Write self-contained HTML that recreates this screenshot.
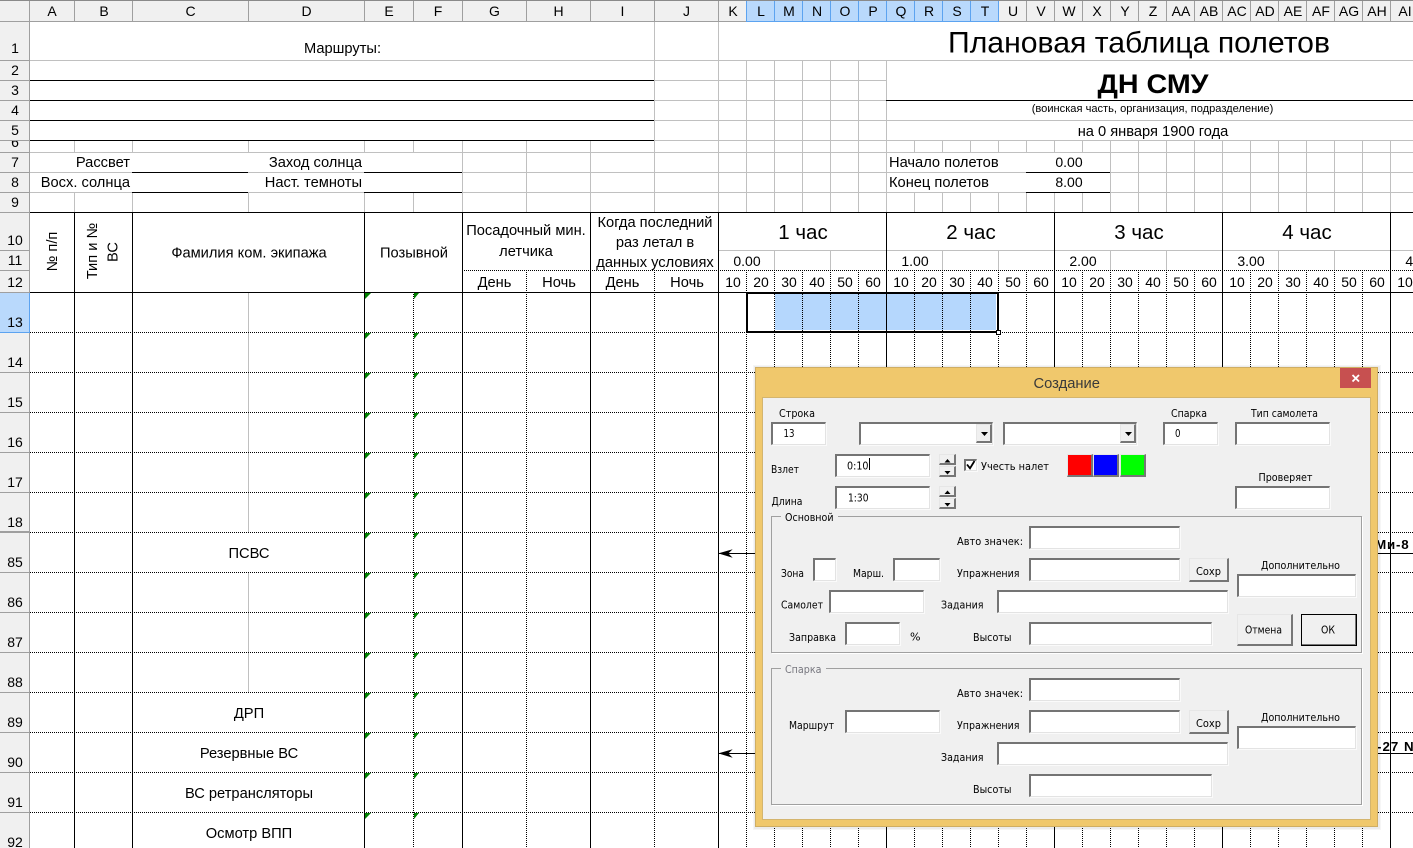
<!DOCTYPE html>
<html><head><meta charset="utf-8"><title>Плановая таблица полетов</title>
<style>
html,body{margin:0;padding:0;background:#fff;width:1413px;height:848px;overflow:hidden}
#w{position:relative;width:1413px;height:848px;overflow:hidden}
svg{position:absolute;left:0;top:0}
.s text{font-family:"Liberation Sans",sans-serif;font-size:14.67px;fill:#000}
.s .n text{font-size:14px}
.d text{font-family:"DejaVu Sans","Liberation Sans",sans-serif;font-size:11px;fill:#000}
.in,.bt,.gr,.lg{position:absolute;box-sizing:border-box;display:block}
.in{background:#fff;border-style:solid;border-width:2px 1px 1px 2px;border-color:#747474 #e3e3e3 #e3e3e3 #747474;box-shadow:1px 1px 0 #fafafa}
.bt{background:#f0f0f0;border-style:solid;border-width:1px 2px 2px 1px;border-color:#e6e6e6 #767676 #767676 #e6e6e6}
.gr{border:1px solid #a0a0a0;box-shadow:1px 1px 0 #fff}
.lg{background:#f0f0f0;height:6px}
</style></head><body><div id="w">
<svg class="s" width="1413" height="848" viewBox="0 0 1413 848" shape-rendering="crispEdges">
<defs><clipPath id="r6"><rect x="0" y="141" width="29" height="11"/></clipPath></defs>
<!-- header backgrounds -->
<rect x="0" y="0" width="1413" height="21" fill="#f0f0f0"/>
<rect x="0" y="0" width="29" height="848" fill="#f0f0f0"/>
<rect x="746" y="1" width="252" height="20" fill="#b9d9fc"/>
<rect x="0" y="293" width="29" height="39" fill="#b9d9fc"/>
<rect x="775" y="294" width="221" height="36" fill="#b5d7fd"/>
<!-- header lines -->
<path fill="none" stroke="#9f9f9f" d="M0 21.5H1413M29.5 0V848M74.5 1V21M132.5 1V21M248.5 1V21M364.5 1V21M413.5 1V21M462.5 1V21M526.5 1V21M590.5 1V21M654.5 1V21M718.5 1V21M1026.5 1V21M1054.5 1V21M1082.5 1V21M1110.5 1V21M1138.5 1V21M1166.5 1V21M1194.5 1V21M1222.5 1V21M1250.5 1V21M1278.5 1V21M1306.5 1V21M1334.5 1V21M1362.5 1V21M1390.5 1V21M0 60.5H29M0 80.5H29M0 100.5H29M0 120.5H29M0 140.5H29M0 152.5H29M0 172.5H29M0 192.5H29M0 212.5H29M0 250.5H29M0 270.5H29M0 292.5H29M0 372.5H29M0 412.5H29M0 452.5H29M0 492.5H29M0 531.5H29M0 532.5H29M0 572.5H29M0 612.5H29M0 652.5H29M0 692.5H29M0 732.5H29M0 772.5H29M0 812.5H29"/>
<rect x="0" y="0" width="1413" height="1" fill="#8a8a8a"/>
<path fill="none" stroke="#5ca3f0" d="M746.5 1V21M774.5 1V21M802.5 1V21M830.5 1V21M858.5 1V21M886.5 1V21M914.5 1V21M942.5 1V21M970.5 1V21M998.5 1V21M746 21.5H999M0 332.5H30M29.5 293V333"/>
<!-- grey gridlines -->
<path fill="none" stroke="#c0c0c0" d="M30 60.5H1413M654 80.5H886M654 100.5H886M654 120.5H1413M654 140.5H1413M30 152.5H1413M30 172.5H132M248 172.5H364M462 172.5H1026M1110 172.5H1413M30 192.5H132M248 192.5H364M462 192.5H1026M1110 192.5H1413M718 250.5H1413
M654.5 22V212M718.5 22V212M746.5 61V212M774.5 61V212M802.5 61V212M830.5 61V212M858.5 61V212M886.5 61V212
M74.5 141V152M132.5 141V152M248.5 141V152M364.5 141V152M413.5 141V152M74.5 193V212M132.5 193V212M248.5 193V212M364.5 193V212M413.5 193V212
M462.5 141V212M526.5 141V212M590.5 141V212
M914.5 141V152M942.5 141V152M970.5 141V152M998.5 141V152M1026.5 141V152M1054.5 141V152M1082.5 141V152M914.5 193V212M942.5 193V212M970.5 193V212M998.5 193V212M1026.5 193V212M1054.5 193V212M1082.5 193V212
M1110.5 141V212M1138.5 141V212M1166.5 141V212M1194.5 141V212M1222.5 141V212M1250.5 141V212M1278.5 141V212M1306.5 141V212M1334.5 141V212M1362.5 141V212M1390.5 141V212
M774.5 251V270M830.5 251V270M942.5 251V270M998.5 251V270M1110.5 251V270M1166.5 251V270M1278.5 251V270M1334.5 251V270
M248.5 293V532M248.5 572V692"/>
<!-- dotted lines -->
<path fill="none" stroke="#000" stroke-dasharray="1 1" d="M462 270.5H1413M30 332.5H1413M30 372.5H1413M30 412.5H1413M30 452.5H1413M30 492.5H1413M30 532.5H1413M30 572.5H1413M30 612.5H1413M30 652.5H1413M30 692.5H1413M30 732.5H1413M30 772.5H1413M30 812.5H1413
M526.5 270V848M654.5 270V848M413.5 292V848M746.5 270V848M774.5 270V848M802.5 270V848M830.5 270V848M858.5 270V848M914.5 270V848M942.5 270V848M970.5 270V848M998.5 270V848M1026.5 270V848M1082.5 270V848M1110.5 270V848M1138.5 270V848M1166.5 270V848M1194.5 270V848M1250.5 270V848M1278.5 270V848M1306.5 270V848M1334.5 270V848M1362.5 270V848"/>
<!-- solid black lines -->
<path fill="none" stroke="#000" d="M30 80.5H654M30 100.5H654M30 120.5H654M30 140.5H654M886 100.5H1413M132 172.5H248M364 172.5H462M1026 172.5H1110M132 192.5H248M364 192.5H462M1026 192.5H1110M30 212.5H1413M30 292.5H1413
M74.5 212V848M132.5 212V848M364.5 212V848M462.5 212V848M590.5 212V848M718.5 212V848M886.5 212V848M1054.5 212V848M1222.5 212V848M1390.5 212V848
M718 553.5H760M718 753.5H760M1370 553.5H1413M1370 753.5H1413"/>
<!-- arrows -->
<g shape-rendering="geometricPrecision">
<path d="M718.3 553.4L732.7 549.3L728.3 553.4L732.7 557.8Z"/>
<path d="M718.3 753.4L732.7 749.3L728.3 753.4L732.7 757.8Z"/>
</g>
<!-- comment triangles -->
<g fill="#008000" shape-rendering="geometricPrecision">
<path d="M365 293h6l-6 6zM414 293h5l-5 6zM365 333h6l-6 6zM414 333h5l-5 6zM365 373h6l-6 6zM414 373h5l-5 6zM365 413h6l-6 6zM414 413h5l-5 6zM365 453h6l-6 6zM414 453h5l-5 6zM365 493h6l-6 6zM414 493h5l-5 6zM365 533h6l-6 6zM414 533h5l-5 6zM365 573h6l-6 6zM414 573h5l-5 6zM365 613h6l-6 6zM414 613h5l-5 6zM365 653h6l-6 6zM414 653h5l-5 6zM365 693h6l-6 6zM414 693h5l-5 6zM365 733h6l-6 6zM414 733h5l-5 6zM365 773h6l-6 6zM414 773h5l-5 6zM365 813h6l-6 6zM414 813h5l-5 6z"/>
</g>
<!-- selection -->
<path fill="none" stroke="#000" stroke-width="2" d="M747 293H998V332H747Z"/>
<rect x="996.5" y="330.5" width="4" height="4" fill="#fff" stroke="#000"/>
<g shape-rendering="geometricPrecision">
<g text-anchor="middle">
<g class="n">
<!-- column heads -->
<text x="52" y="16">A</text><text x="104" y="16">B</text><text x="190.5" y="16">C</text><text x="306.5" y="16">D</text><text x="389" y="16">E</text><text x="438" y="16">F</text><text x="494.5" y="16">G</text><text x="558.5" y="16">H</text><text x="622.5" y="16">I</text><text x="686.5" y="16">J</text><text x="733" y="16">K</text><text x="761" y="16">L</text><text x="789" y="16">M</text><text x="817" y="16">N</text><text x="845" y="16">O</text><text x="873" y="16">P</text><text x="901" y="16">Q</text><text x="929" y="16">R</text><text x="957" y="16">S</text><text x="985" y="16">T</text><text x="1013" y="16">U</text><text x="1041" y="16">V</text><text x="1069" y="16">W</text><text x="1097" y="16">X</text><text x="1125" y="16">Y</text><text x="1153" y="16">Z</text><text x="1181" y="16">AA</text><text x="1209" y="16">AB</text><text x="1237" y="16">AC</text><text x="1265" y="16">AD</text><text x="1293" y="16">AE</text><text x="1321" y="16">AF</text><text x="1349" y="16">AG</text><text x="1377" y="16">AH</text><text x="1405" y="16">AI</text>
<!-- row heads -->
<text x="15" y="53">1</text><text x="15" y="75">2</text><text x="15" y="95">3</text><text x="15" y="115">4</text><text x="15" y="135">5</text><text x="15" y="147" clip-path="url(#r6)">6</text><text x="15" y="167">7</text><text x="15" y="187">8</text><text x="15" y="207">9</text><text x="15" y="245">10</text><text x="15" y="265">11</text><text x="15" y="287">12</text><text x="15" y="327">13</text><text x="15" y="367">14</text><text x="15" y="407">15</text><text x="15" y="447">16</text><text x="15" y="487">17</text><text x="15" y="527">18</text><text x="15" y="567">85</text><text x="15" y="607">86</text><text x="15" y="647">87</text><text x="15" y="687">88</text><text x="15" y="727">89</text><text x="15" y="767">90</text><text x="15" y="807">91</text><text x="15" y="847">92</text>
<text x="1069" y="167">0.00</text><text x="1069" y="187">8.00</text>
<text x="747" y="266">0.00</text><text x="915" y="266">1.00</text><text x="1083" y="266">2.00</text><text x="1251" y="266">3.00</text><text x="1419" y="266">4.00</text>
<text x="733" y="287">10</text><text x="761" y="287">20</text><text x="789" y="287">30</text><text x="817" y="287">40</text><text x="845" y="287">50</text><text x="873" y="287">60</text>
<text x="901" y="287">10</text><text x="929" y="287">20</text><text x="957" y="287">30</text><text x="985" y="287">40</text><text x="1013" y="287">50</text><text x="1041" y="287">60</text>
<text x="1069" y="287">10</text><text x="1097" y="287">20</text><text x="1125" y="287">30</text><text x="1153" y="287">40</text><text x="1181" y="287">50</text><text x="1209" y="287">60</text>
<text x="1237" y="287">10</text><text x="1265" y="287">20</text><text x="1293" y="287">30</text><text x="1321" y="287">40</text><text x="1349" y="287">50</text><text x="1377" y="287">60</text><text x="1405" y="287">10</text>
</g>
<!-- body -->
<text x="342.5" y="53">Маршруты:</text>
<text x="249" y="257.5">Фамилия ком. экипажа</text>
<text x="414" y="257.5">Позывной</text>
<text x="526" y="235">Посадочный мин.</text><text x="526" y="256">летчика</text>
<text x="655" y="227">Когда последний</text><text x="655" y="247">раз летал в</text><text x="655" y="267">данных условиях</text>
<text x="494.5" y="287">День</text><text x="559" y="287">Ночь</text><text x="622.5" y="287">День</text><text x="687" y="287">Ночь</text>
<text transform="translate(57,251.5) rotate(-90)">№ п/п</text>
<text transform="translate(97,251) rotate(-90)">Тип и №</text>
<text transform="translate(117.5,252) rotate(-90)">ВС</text>
<text x="249" y="558">ПСВС</text><text x="249" y="718">ДРП</text><text x="249" y="758">Резервные ВС</text><text x="249" y="798">ВС ретрансляторы</text><text x="249" y="838">Осмотр ВПП</text>
<text x="1139" y="52.5" style="font-size:29.33px" textLength="382" lengthAdjust="spacingAndGlyphs">Плановая таблица полетов</text>
<text x="1153" y="93" style="font-size:26.67px;font-weight:bold" textLength="111" lengthAdjust="spacingAndGlyphs">ДН СМУ</text>
<text x="1152.5" y="112" style="font-size:11.1px">(воинская часть, организация, подразделение)</text>
<text x="1153" y="136">на 0 января 1900 года</text>
<text x="803" y="239" style="font-size:20.5px">1 час</text><text x="971" y="239" style="font-size:20.5px">2 час</text><text x="1139" y="239" style="font-size:20.5px">3 час</text><text x="1307" y="239" style="font-size:20.5px">4 час</text>
</g>
<g text-anchor="end">
<text x="130" y="167">Рассвет</text><text x="130" y="187">Восх. солнца</text>
<text x="362" y="167">Заход солнца</text><text x="362" y="187">Наст. темноты</text>
<text x="1409.5" y="549" style="font-size:13.33px;font-weight:bold;letter-spacing:.8px">Ми-8</text>
</g>
<text x="889" y="167">Начало полетов</text><text x="889" y="187">Конец полетов</text>
<text x="1377" y="751" style="font-size:13.33px;font-weight:bold;letter-spacing:1px">-27 N</text>
</g>
</svg>

<!-- dialog -->
<i style="position:absolute;left:753px;top:365px;width:628px;height:465px;background:rgba(0,0,0,.035)"></i>
<i style="position:absolute;left:754px;top:366px;width:626px;height:463px;background:rgba(0,0,0,.04)"></i>
<div style="position:absolute;box-sizing:border-box;left:755px;top:367px;width:623px;height:460px;background:#f0c86c;border:1px solid #cfae64"></div>
<div style="position:absolute;box-sizing:border-box;left:762px;top:397px;width:609px;height:423px;background:#f0f0f0;border:1px solid #d4b56e"></div>
<div style="position:absolute;left:1340px;top:368px;width:31px;height:20px;background:#c75050"></div>

<i class="gr" style="left:771px;top:516px;width:591px;height:137px"></i>
<i class="lg" style="left:781px;top:514px;width:57px"></i>
<i class="gr" style="left:771px;top:668px;width:591px;height:137px"></i>
<i class="lg" style="left:781px;top:666px;width:45px"></i>

<i class="in" style="left:771px;top:422px;width:55px;height:23px"></i>
<i class="in" style="left:859px;top:422px;width:134px;height:23px"></i>
<i class="bt" style="left:976px;top:424px;width:16px;height:19px"></i>
<i class="in" style="left:1003px;top:422px;width:134px;height:23px"></i>
<i class="bt" style="left:1120px;top:424px;width:16px;height:19px"></i>
<i class="in" style="left:1163px;top:422px;width:55px;height:23px"></i>
<i class="in" style="left:1235px;top:422px;width:95px;height:23px"></i>
<i class="in" style="left:835px;top:454px;width:95px;height:23px"></i>
<i class="in" style="left:835px;top:486px;width:95px;height:23px"></i>
<i class="in" style="left:1235px;top:486px;width:95px;height:23px"></i>
<i class="in" style="left:964px;top:459px;width:13px;height:12px"></i>
<i class="in" style="left:1029px;top:526px;width:151px;height:23px"></i>
<i class="in" style="left:813px;top:558px;width:23px;height:23px"></i>
<i class="in" style="left:893px;top:558px;width:47px;height:23px"></i>
<i class="in" style="left:1029px;top:558px;width:151px;height:23px"></i>
<i class="in" style="left:1237px;top:574px;width:119px;height:23px"></i>
<i class="in" style="left:829px;top:590px;width:95px;height:23px"></i>
<i class="in" style="left:997px;top:590px;width:231px;height:23px"></i>
<i class="in" style="left:845px;top:622px;width:55px;height:23px"></i>
<i class="in" style="left:1029px;top:622px;width:183px;height:23px"></i>
<i class="in" style="left:1029px;top:678px;width:151px;height:23px"></i>
<i class="in" style="left:845px;top:710px;width:95px;height:23px"></i>
<i class="in" style="left:1029px;top:710px;width:151px;height:23px"></i>
<i class="in" style="left:1237px;top:726px;width:119px;height:23px"></i>
<i class="in" style="left:997px;top:742px;width:231px;height:23px"></i>
<i class="in" style="left:1029px;top:774px;width:183px;height:23px"></i>

<i class="bt" style="left:939px;top:454px;width:17px;height:11px"></i>
<i class="bt" style="left:939px;top:466px;width:17px;height:11px"></i>
<i class="bt" style="left:939px;top:486px;width:17px;height:11px"></i>
<i class="bt" style="left:939px;top:498px;width:17px;height:11px"></i>
<i class="bt" style="left:1067px;top:454px;width:26px;height:23px;background:#f00"></i>
<i class="bt" style="left:1093px;top:454px;width:26px;height:23px;background:#00f"></i>
<i class="bt" style="left:1120px;top:454px;width:26px;height:23px;background:#0f0"></i>
<i class="bt" style="left:1189px;top:558px;width:40px;height:24px"></i>
<i class="bt" style="left:1189px;top:710px;width:40px;height:24px"></i>
<i class="bt" style="left:1237px;top:614px;width:56px;height:32px"></i>
<i class="bt" style="left:1301px;top:614px;width:56px;height:32px;outline:1px solid #000;outline-offset:-1px"></i>

<svg class="d" width="1413" height="848" viewBox="0 0 1413 848">
<path d="M1352.5 375L1359 381.5M1359 375L1352.5 381.5" stroke="#fff" stroke-width="1.8" fill="none"/>
<path d="M981 432h7l-3.5 4zM1125 432h7l-3.5 4zM944.5 462.5h6l-3-3.5zM944.5 471h6l-3 3.5zM944.5 494h6l-3-3.5zM944.5 503h6l-3 3.5z" fill="#000"/>
<path d="M967 464.5L970 468.3L974.5 461" stroke="#000" stroke-width="1.8" fill="none"/>
<rect x="869" y="458" width="1" height="12" fill="#000"/>
<text x="1033.5" y="388" style="font-family:'Liberation Sans',sans-serif;font-size:14.67px;fill:#3a3a3a" textLength="66.5" lengthAdjust="spacingAndGlyphs">Создание</text>
<text x="779" y="417" textLength="36" lengthAdjust="spacingAndGlyphs">Строка</text>
<text x="783.5" y="437" textLength="11" lengthAdjust="spacingAndGlyphs">13</text>
<text x="1171" y="417" textLength="36" lengthAdjust="spacingAndGlyphs">Спарка</text>
<text x="1175" y="437" textLength="5.5" lengthAdjust="spacingAndGlyphs">0</text>
<text x="1251" y="417" textLength="67" lengthAdjust="spacingAndGlyphs">Тип самолета</text>
<text x="771" y="473" textLength="28" lengthAdjust="spacingAndGlyphs">Взлет</text>
<text x="847" y="469.5" textLength="21.5" lengthAdjust="spacingAndGlyphs">0:10</text>
<text x="981" y="470" textLength="68" lengthAdjust="spacingAndGlyphs">Учесть налет</text>
<text x="771.5" y="505" textLength="31" lengthAdjust="spacingAndGlyphs">Длина</text>
<text x="848" y="501.5" textLength="20.5" lengthAdjust="spacingAndGlyphs">1:30</text>
<text x="1258.5" y="481" textLength="54" lengthAdjust="spacingAndGlyphs">Проверяет</text>
<text x="785" y="521" textLength="48.5" lengthAdjust="spacingAndGlyphs">Основной</text>
<text x="957" y="545" textLength="66" lengthAdjust="spacingAndGlyphs">Авто значек:</text>
<text x="781" y="577" textLength="23" lengthAdjust="spacingAndGlyphs">Зона</text>
<text x="853" y="577" textLength="31" lengthAdjust="spacingAndGlyphs">Марш.</text>
<text x="957" y="577" textLength="62.5" lengthAdjust="spacingAndGlyphs">Упражнения</text>
<text x="1196" y="575" textLength="25" lengthAdjust="spacingAndGlyphs">Сохр</text>
<text x="1261" y="569" textLength="79" lengthAdjust="spacingAndGlyphs">Дополнительно</text>
<text x="781" y="608.5" textLength="42" lengthAdjust="spacingAndGlyphs">Самолет</text>
<text x="941" y="608.5" textLength="42.5" lengthAdjust="spacingAndGlyphs">Задания</text>
<text x="789" y="641" textLength="47" lengthAdjust="spacingAndGlyphs">Заправка</text>
<text x="910" y="640.5" textLength="10.5" lengthAdjust="spacingAndGlyphs">%</text>
<text x="973" y="641" textLength="38.5" lengthAdjust="spacingAndGlyphs">Высоты</text>
<text x="1245" y="633.5" textLength="37" lengthAdjust="spacingAndGlyphs">Отмена</text>
<text x="1321" y="633.5" textLength="14" lengthAdjust="spacingAndGlyphs">ОК</text>
<text x="785" y="673" textLength="36.5" lengthAdjust="spacingAndGlyphs" style="fill:#77777f">Спарка</text>
<text x="957" y="697" textLength="66" lengthAdjust="spacingAndGlyphs">Авто значек:</text>
<text x="789" y="729" textLength="45" lengthAdjust="spacingAndGlyphs">Маршрут</text>
<text x="957" y="729" textLength="62.5" lengthAdjust="spacingAndGlyphs">Упражнения</text>
<text x="1196" y="727" textLength="25" lengthAdjust="spacingAndGlyphs">Сохр</text>
<text x="1261" y="721" textLength="79" lengthAdjust="spacingAndGlyphs">Дополнительно</text>
<text x="941" y="761" textLength="42.5" lengthAdjust="spacingAndGlyphs">Задания</text>
<text x="973" y="793" textLength="38.5" lengthAdjust="spacingAndGlyphs">Высоты</text>
</svg>
</div></body></html>
